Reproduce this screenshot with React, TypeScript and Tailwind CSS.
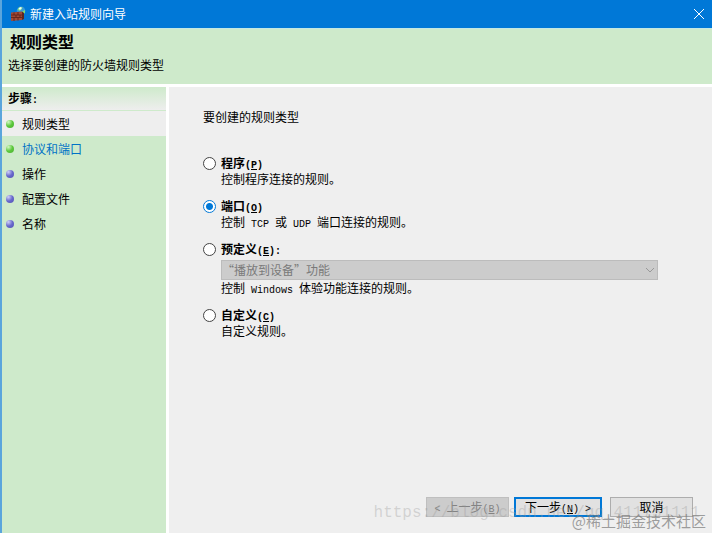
import type { ReactNode } from "react";

const steps = [
  { label: "规则类型", done: true, current: true },
  { label: "协议和端口", done: true, link: true },
  { label: "操作" },
  { label: "配置文件" },
  { label: "名称" },
];

function Latin({ children }: { children: ReactNode }) {
  return (
    <span className="whitespace-pre font-['Liberation_Mono',monospace] text-[10px] leading-none">{children}</span>
  );
}

function Key({ letter, after = "" }: { letter: string; after?: string }) {
  return (
    <Latin>
      (<u className="underline-offset-1">{letter}</u>){after}
    </Latin>
  );
}

function Bullet({ done }: { done?: boolean }) {
  return (
    <span
      className={`size-2 shrink-0 rounded-full ${
        done
          ? "bg-[radial-gradient(circle_at_30%_25%,#d4f7c4,#5cc83c_50%,#4caf35)]"
          : "bg-[radial-gradient(circle_at_30%_25%,#d0d0f8,#6868cc_50%,#5252b4)]"
      }`}
    />
  );
}

function FirewallIcon() {
  return (
    <svg viewBox="0 0 16 16" className="size-4" aria-hidden="true">
      <circle cx="11" cy="4.8" r="4.3" fill="#3a9ad8" />
      <path d="M7.500 3.500 9.500 1l3 .2-1 2.300-2 1.500zM11.500 6l3.500-2v3l-3 1.500z" fill="#7fdc7a" />
      <path d="M8.500 2.500 10.500 1l1.500 1-2 2z" fill="#e6fbff" />
      <path d="M1 6.500 12 5.500V14l-11 1z" fill="#a04a35" />
      <path
        d="M1 9h11M1 11.500h11M4 6.500V9M8 6v3M6 9v2.500M10 9v2.500M4 11.500V15M8 11.500v3"
        stroke="#5a1f16"
        strokeWidth=".8"
        fill="none"
      />
      <path d="M12 5.500 14 7v6l-2 1z" fill="#5c281f" />
    </svg>
  );
}

function Option({
  id,
  title,
  letter,
  after,
  checked,
  children,
}: {
  id: string;
  title: string;
  letter: string;
  after?: string;
  checked?: boolean;
  children: ReactNode;
}) {
  return (
    <div className="grid grid-cols-[18px_1fr]">
      <input
        id={id}
        type="radio"
        name="rule"
        defaultChecked={checked}
        className="mt-0.5 size-[13px] appearance-none rounded-full border border-[#444] bg-white checked:border-[#0078d7] checked:bg-[radial-gradient(circle,#0078d7_3px,#fff_4px)]"
      />
      <label htmlFor={id} className="h-4 font-bold">
        {title}
        <Key letter={letter} after={after} />
      </label>
      <div className="col-start-2">{children}</div>
    </div>
  );
}

export default function App() {
  return (
    <div className="relative flex min-h-screen flex-col overflow-hidden border-l-2 border-[#5aa5dc] bg-[#efefef] font-['Noto_Sans_CJK_SC',sans-serif] text-xs leading-4 text-black">
      <header className="flex h-7 items-center bg-[#0078d7] px-2 text-white">
        <FirewallIcon />
        <h1 className="ml-1 flex-1">新建入站规则向导</h1>
        <button aria-label="关闭">
          <svg viewBox="0 0 10 10" className="size-[10px]" stroke="#fff" fill="none">
            <path d="M0 0 10 10M10 0 0 10" />
          </svg>
        </button>
      </header>
      <section className="h-14 border-t border-[#c4e8e4] bg-[#ceeacb] pt-0.5 pl-1.5">
        <h2 className="pl-0.5 text-base leading-5 font-bold">规则类型</h2>
        <p className="mt-1.5">选择要创建的防火墙规则类型</p>
      </section>
      <div className="flex flex-1 border-t-[3px] border-white">
        <nav className="w-[167px] shrink-0 border-r-[3px] border-white bg-[#ceeacb]">
          <h3 className="h-[23px] bg-linear-to-b from-[#ceeacb] to-[#eeeeee] pt-[3px] pl-1.5 font-bold">
            步骤<Latin>:</Latin>
          </h3>
          <ul className="pt-px">
            {steps.map((s) => (
              <li
                key={s.label}
                className={`flex h-[25px] items-center gap-2 pl-1 ${s.current ? "bg-[#eeeeee]" : ""}`}
              >
                <Bullet done={s.done} />
                {s.link ? (
                  <a href="#ports" className="text-[#0072c6]">
                    {s.label}
                  </a>
                ) : (
                  <span>{s.label}</span>
                )}
              </li>
            ))}
          </ul>
        </nav>
        <main className="flex flex-1 flex-col">
          <div className="flex-1 pt-[22px] pr-[54px] pl-[34px]">
            <p className="mb-[30px]">要创建的规则类型</p>
            <fieldset className="flex flex-col gap-[11px]">
              <Option id="program" title="程序" letter="P">
                <p className="h-4">控制程序连接的规则。</p>
              </Option>
              <Option id="port" title="端口" letter="O" checked>
                <p className="h-4">
                  控制<Latin> TCP </Latin>或<Latin> UDP </Latin>端口连接的规则。
                </p>
              </Option>
              <Option id="predefined" title="预定义" letter="E" after=":">
                <div className="relative mt-[3px] text-[#7a7a7a]">
                  <select
                    disabled
                    aria-label="预定义规则"
                    className="block h-5 w-full appearance-none border border-[#bcbcbc] bg-[#cccccc] opacity-100"
                  >
                    <option>“播放到设备”功能</option>
                  </select>
                  <svg viewBox="0 0 8 5" className="absolute top-2 right-1 h-[5px] w-2" stroke="#999" fill="none">
                    <path d="M0 0 4 4 8 0" />
                  </svg>
                </div>
                <p className="h-4">
                  控制<Latin> Windows </Latin>体验功能连接的规则。
                </p>
              </Option>
              <Option id="custom" title="自定义" letter="C">
                <p className="h-4">自定义规则。</p>
              </Option>
            </fieldset>
          </div>
          <footer className="flex justify-end pr-[19px] pb-4">
            <button disabled className="h-5 w-[83px] border border-[#bfbfbf] bg-[#cccccc] text-[#838383]">
              <Latin>&lt; </Latin>上一步<Key letter="B" />
            </button>
            <button className="ml-[5px] h-5 w-[88px] border-2 border-[#0078d7] bg-[#e1e1e1]">
              下一步<Key letter="N" />
              <Latin> &gt;</Latin>
            </button>
            <button className="ml-2 h-5 w-[83px] border border-[#adadad] bg-[#e1e1e1]">取消</button>
          </footer>
        </main>
      </div>
      <p className="pointer-events-none absolute right-3 bottom-2 font-['Liberation_Mono',monospace] text-base leading-6 whitespace-nowrap text-[#999]/35">
        https://blog.csdn.net/qq_411751111
      </p>
      <p className="pointer-events-none absolute right-1.5 bottom-0.5 text-[15px] leading-5 whitespace-nowrap text-[#777]/70">
        @稀土掘金技术社区
      </p>
    </div>
  );
}
